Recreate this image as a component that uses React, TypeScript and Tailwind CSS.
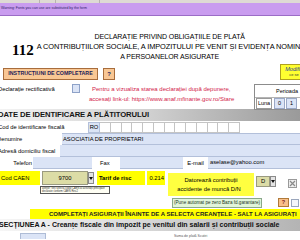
const idCells = Array.from({ length: 13 })

function DropArrow() {
  return (
    <div className="flex h-full w-[6px] items-center justify-center border border-[#8a8a8a] bg-[#e4e4e4]">
      <svg width="4" height="3" viewBox="0 0 4 3">
        <path d="M0 0h4L2 3z" fill="#111" />
      </svg>
    </div>
  )
}

export default function App() {
  return (
    <div className="relative h-[240px] w-[300px] overflow-hidden bg-white text-black [font-family:'Liberation_Sans',Arial,sans-serif]">
      {/* browser toolbar edge */}
      <div className="flex h-[3px] bg-[#dedad4]">
        <div className="w-[40px] border-r border-[#b8b4ae]" />
        <div className="w-[16px] border-r border-[#b8b4ae]" />
        <div className="w-[44px] border-r border-[#b8b4ae]" />
      </div>
      <div className="flex h-[13px] items-center border-b border-[#9b6cc6] bg-[#c99cef] pl-[1px]">
        <span className="whitespace-nowrap text-[3.5px] text-[#2e2368]">
          Warning: Fonts you can use are substituted by the form
        </span>
      </div>

      <div className="h-[16px]" />

      {/* title */}
      <div className="flex h-[30px]">
        <div className="w-[60px] pl-[12px] pt-[11px] [font-family:'Liberation_Serif',serif] text-[15px] font-bold leading-none">
          112
        </div>
        <div className="ml-[3px] flex w-[266px] shrink-0 flex-col items-center whitespace-nowrap text-[7px] leading-[10px] tracking-[-0.1px]">
          <span>DECLARAȚIE PRIVIND OBLIGAȚIILE DE PLATĂ</span>
          <span className="self-start text-[7.4px]">A CONTRIBUȚIILOR SOCIALE, A IMPOZITULUI PE VENIT ȘI EVIDENȚA NOMINALĂ</span>
          <span>A PERSOANELOR ASIGURATE</span>
        </div>
      </div>

      {/* instructions */}
      <div className="flex h-[20px] items-start">
        <div className="ml-[3px] mt-[6px] flex h-[12px] w-[95px] items-center justify-center border border-[#a86d3c] bg-[#f9c794] text-[5.3px] font-bold text-[#1c1c58]">
          INSTRUCȚIUNI DE COMPLETARE
        </div>
        <div className="ml-[5px] mt-[6px] flex h-[12px] w-[12px] items-center justify-center border border-[#a86d3c] bg-[#f9c794] text-[6px] font-bold text-[#1c1c58]">
          ?
        </div>
        <div className="ml-auto -mr-[8px] mt-[2px] flex h-[16px] w-[28px] flex-col items-center border border-[#b0a020] bg-[#ffff30] pt-[1px] leading-[6px] text-[#1d3b9a]">
          <span className="text-[5.5px] italic">Modific</span>
          <span className="text-[4px] text-[#333]">ce se</span>
        </div>
      </div>

      {/* rectificativa / perioada */}
      <div className="flex h-[27px] items-start">
        <span className="-ml-[2px] mt-[3px] w-[74px] whitespace-nowrap text-[5.8px] leading-[8px]">
          Declarație rectificativă
        </span>
        <div className="mt-[2px] h-[9px] w-[8px] border border-[#8ea2c8] bg-[#dbe4f6]" />
        <div className="ml-[12px] mt-[2px] flex flex-col whitespace-nowrap text-[6px] leading-[10px] text-[#d2234a]">
          <span>Pentru a vizualiza starea declarației după depunere,</span>
          <span className="-ml-[3px]">accesați link-ul: https://www.anaf.mfinante.gov.ro/Stare</span>
        </div>
        <div className="ml-auto -mr-[6px] mt-[2px] flex h-[26px] w-[52px] flex-col border border-[#8c8c8c] text-[5.5px]">
          <div className="flex h-[12px] items-center pl-[21px]">Perioada</div>
          <div className="flex h-[12px] items-center border-t border-[#b4b4b4] px-[1px]">
            <span className="flex h-[11px] w-[16px] items-center justify-center border border-[#9a9a9a]">Luna</span>
            <span className="ml-[2px] flex h-[11px] w-[11px] items-center justify-center border border-[#9aa8c6] bg-[#dbe4f6]">0</span>
            <span className="ml-[1px] flex h-[11px] w-[11px] items-center justify-center border border-[#9aa8c6] bg-[#dbe4f6]">1</span>
          </div>
        </div>
      </div>

      {/* section header */}
      <div className="flex h-[12px] items-center bg-linear-to-r from-[#f3f3f3] via-[#d0d0d0] to-[#9a9a9a]">
        <span className="-ml-[2px] whitespace-nowrap text-[7.7px] font-bold tracking-[-0.1px] text-[#151515]">
          DATE DE IDENTIFICARE A PLĂTITORULUI
        </span>
      </div>

      {/* identification rows */}
      <div className="flex h-[12px] items-center text-[5.8px]">
        <span className="-ml-[2px] w-[90px] whitespace-nowrap">Cod de identificare fiscală</span>
        <span className="flex h-[11px] w-[12px] items-center justify-center border border-[#b4c0da] bg-[#dbe4f6]">RO</span>
        <div className="flex h-[11px] border-y border-[#c4c4c4]">
          {idCells.map((_, i) => (
            <span key={i} className="h-full w-[10.77px] border-r border-[#c4c4c4]" />
          ))}
        </div>
      </div>
      <div className="flex h-[12px] items-stretch text-[5.8px]">
        <span className="-ml-[3px] flex w-[65px] items-center">Denumire</span>
        <div className="flex flex-1 items-center border-y border-[#b3c0da] bg-[#dbe4f6] pl-[1px]">ASOCIATIA DE PROPRIETARI</div>
      </div>
      <div className="flex h-[12px] items-stretch text-[5.8px]">
        <span className="-ml-[2px] flex w-[62px] items-center whitespace-nowrap">Adresă domiciliu fiscal</span>
        <div className="flex-1 border-b border-[#b3c0da] bg-[#dbe4f6]" />
      </div>
      <div className="flex h-[12px] items-stretch text-[5.8px]">
        <span className="flex w-[33px] items-center justify-end pr-[1px]">Telefon</span>
        <div className="w-[59px] border-b border-[#b3c0da] bg-[#dbe4f6]" />
        <span className="flex w-[28px] items-center pl-[8px]">Fax</span>
        <div className="w-[63px] border-b border-[#b3c0da] bg-[#dbe4f6]" />
        <span className="flex w-[25px] items-center justify-center">E-mail</span>
        <div className="flex flex-1 items-center border-b border-[#b3c0da] bg-[#dbe4f6] pl-[2px]">aselase@yahoo.com</div>
      </div>

      <div className="h-[2px]" />

      {/* CAEN block */}
      <div className="flex h-[26px] items-start text-[5.8px]">
        <div className="flex w-[166px] flex-col">
          <div className="flex h-[14px] items-stretch">
            <span className="flex w-[40px] items-center bg-[#ffff00] pl-[1px]">Cod CAEN</span>
            <span className="ml-[2px] flex w-[46px] items-center justify-center border border-[#9a9a80] bg-[#dcdca6]">9700</span>
            <div className="my-[1px]">
              <DropArrow />
            </div>
            <span className="ml-[3px] flex w-[48px] items-center bg-[#ffff00] pl-[2px] font-bold">Tarif de risc</span>
            <span className="ml-[2px] flex w-[18px] items-center justify-end bg-[#ffff00] pr-[1px]">0.214</span>
          </div>
          <div className="ml-[40px] mt-[1px] h-[8px] w-[70px] border border-[#555] bg-[#fffff4] px-[1px] text-[2.6px] leading-[3px] text-[#333]">
            atenție! Veți selecta codul CAEN al activității principale declarate conform CAEN Rev.2
          </div>
        </div>
        <div className="ml-[2px] mt-[2px] flex h-[23px] w-[86px] flex-col items-center justify-center bg-[#ffff40] leading-[9px]">
          <span>Datorează contribuții</span>
          <span className="-ml-[4px]">accidente de muncă D/N</span>
        </div>
        <div className="ml-[2px] mt-[5px] flex h-[11px]">
          <span className="flex w-[14px] items-center justify-center border border-[#9a9a80] bg-[#dcdca6]">D</span>
          <DropArrow />
        </div>
        <svg className="ml-auto mr-[3px] mt-[8px]" width="9" height="9" viewBox="0 0 9 9">
          <rect x="0.5" y="0.5" width="8" height="8" fill="#eeeeee" stroke="#9a9a9a" />
          <path d="M2 2l5 5M7 2l-5 5" stroke="#8a8a8a" strokeWidth="1.2" />
        </svg>
      </div>

      {/* pune automat */}
      <div className="flex h-[12px] items-start">
        <div className="ml-[172px] mt-[1px] flex h-[10px] w-[90px] items-center justify-center border border-[#8aa88a] bg-[#e1f4da] text-[4.6px] whitespace-nowrap text-[#1e3a1e]">
          (Pune automat pe zero Baza fd.garantare)
        </div>
        <div className="ml-[16px] mt-[1px] flex h-[9px] w-[11px] items-center justify-center border border-[#b07a3a] bg-[#f8bf8a] text-[5.5px] font-bold text-[#7a1c1c]">
          ?
        </div>
        <div className="ml-[2px] mt-[2px] h-[8px] w-[8px] border border-[#9aa6bc] bg-[#f4f6fb]" />
      </div>

      {/* yellow link bar */}
      <div className="flex h-[10px] items-center">
        <div className="ml-[30px] flex h-full flex-1 items-center bg-[#ffff00] pl-[19px] whitespace-nowrap text-[6px] font-bold text-[#222]">
          COMPLETAȚI ASIGURAȚII ÎNAINTE DE A SELECTA CREANȚELE - SALT LA ASIGURAȚI
        </div>
      </div>

      {/* section A */}
      <div className="flex h-[12px] items-center bg-linear-to-r from-[#f6f6f6] via-[#d6d6d6] to-[#b4b4b4]">
        <span className="-ml-[1px] whitespace-nowrap text-[7px] font-bold text-[#111]">
          SECȚIUNEA A - Creanțe fiscale din impozit pe venitul din salarii și contribuții sociale
        </span>
      </div>

      <div className="flex h-[8px] items-end">
        <div className="ml-[20px] h-[6px] w-[26px] border border-b-0 border-[#aebcd6] bg-[#dbe4f6]" />
        <span className="ml-[128px] whitespace-nowrap text-[3.5px] text-[#555]">Suma de plată   Scutiri</span>
      </div>
    </div>
  )
}
